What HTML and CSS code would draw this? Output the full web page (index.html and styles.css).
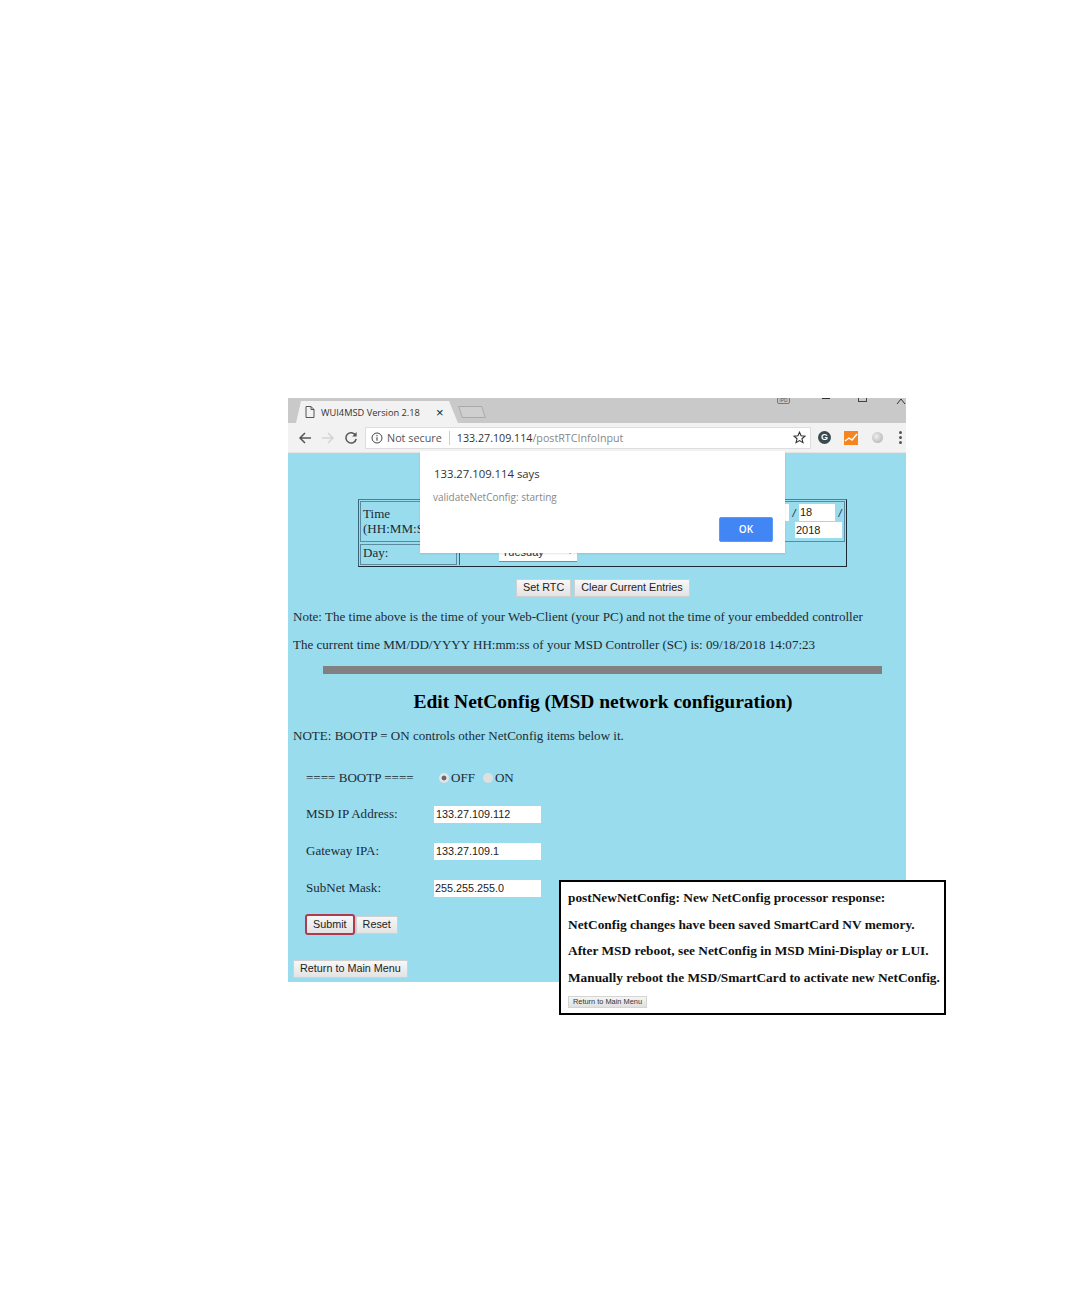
FILE: index.html
```html
<!DOCTYPE html>
<html lang="en">
<head>
<meta charset="utf-8">
<title>WUI4MSD Version 2.18</title>
<link rel="stylesheet" href="styles.css">
</head>
<body>
<div class="figure">
  <div class="window">
    <div class="tabstrip">
      <div class="tab">
        <svg class="doc" viewBox="0 0 10 12" width="10" height="12"><path d="M1 .5h5l3 3v8H1zM6 .5v3h3" fill="none" stroke="#555" stroke-width="1"/></svg>
        <span class="tab-title">WUI4MSD Version 2.18</span>
        <span class="tab-close">×</span>
      </div>
      <div class="newtab"></div>
      <div class="winctl">
        <span class="badge">IPD</span>
        <span class="min"></span>
        <span class="max"></span>
        <svg class="close" viewBox="0 0 10 6" width="10" height="6"><path d="M1 6L5 1l4 5" fill="none" stroke="#333" stroke-width="1"/></svg>
      </div>
    </div>
    <div class="toolbar">
      <svg class="nav" viewBox="0 0 14 14" width="14" height="14"><path d="M13 7H2M7 2L2 7l5 5" fill="none" stroke="#555" stroke-width="1.5"/></svg>
      <svg class="nav" viewBox="0 0 14 14" width="14" height="14"><path d="M1 7h11M7 2l5 5-5 5" fill="none" stroke="#d4d4d4" stroke-width="1.5"/></svg>
      <svg class="nav" viewBox="0 0 14 14" width="14" height="14"><path d="M11.6 4.2A5.2 5.2 0 1 0 12.2 8" fill="none" stroke="#555" stroke-width="1.5"/><path d="M12.6 1v4.4H8.2z" fill="#555"/></svg>
      <div class="omnibox">
        <svg viewBox="0 0 12 12" width="12" height="12"><circle cx="6" cy="6" r="5" fill="none" stroke="#444" stroke-width="1"/><path d="M6 5.2v3.6M6 3v1.2" stroke="#444" stroke-width="1.1"/></svg>
        <span class="secure">Not secure</span>
        <span class="sep"></span>
        <span class="url">133.27.109.114<span class="path">/postRTCInfoInput</span></span>
        <svg class="star" viewBox="0 0 14 14" width="13" height="13"><path d="M7 1.3l1.7 3.900 4.200.4-3.200 2.800 1 4.100L7 10.300l-3.700 2.200 1-4.100L1.100 5.600l4.200-.4z" fill="none" stroke="#333" stroke-width="1.2"/></svg>
      </div>
      <div class="ext">
        <span class="ext-g">G</span>
        <svg viewBox="0 0 14 14" width="14" height="14"><rect width="14" height="14" fill="#f5861f"/><path d="M1 10l4-3 3 2 5-6" fill="none" stroke="#fff" stroke-width="1.4"/></svg>
        <span class="ext-ball"></span>
        <span class="dots"><i></i><i></i><i></i></span>
      </div>
    </div>
    <main class="page">
      <div class="rtc">
        <div class="rtc-row rtc-time">
          <div class="rtc-label">Time<br>(HH:MM:SS)</div>
          <div class="rtc-values">
            <div class="date-line"><span class="field w40">14</span><span class="slash">/</span><span class="field w36">18</span><span class="slash">/</span></div>
            <div class="year-line"><span class="field w47">2018</span></div>
          </div>
        </div>
        <div class="rtc-row rtc-day">
          <div class="rtc-label">Day:</div>
          <div class="rtc-values"><span class="select">Tuesday<span class="caret">▾</span></span></div>
        </div>
      </div>
      <div class="actions">
        <span class="btn">Set RTC</span>
        <span class="btn">Clear Current Entries</span>
      </div>
      <p class="line note">Note: The time above is the time of your Web-Client (your PC) and not the time of your embedded controller</p>
      <p class="line current">The current time MM/DD/YYYY HH:mm:ss of your MSD Controller (SC) is: 09/18/2018 14:07:23</p>
      <div class="rule"></div>
      <h1>Edit NetConfig (MSD network configuration)</h1>
      <p class="line bootnote">NOTE: BOOTP = ON controls other NetConfig items below it.</p>
      <div class="form">
        <div class="form-row boot">
          <span class="form-label">==== BOOTP ====</span>
          <span class="radios"><i class="radio on"></i><span>OFF</span><i class="radio"></i><span>ON</span></span>
        </div>
        <div class="form-row"><span class="form-label">MSD IP Address:</span><span class="input">133.27.109.112</span></div>
        <div class="form-row"><span class="form-label">Gateway IPA:</span><span class="input">133.27.109.1</span></div>
        <div class="form-row"><span class="form-label">SubNet Mask:</span><span class="input tight">255.255.255.0</span></div>
        <div class="form-buttons"><span class="btn focus">Submit</span><span class="btn">Reset</span></div>
      </div>
      <div class="return"><span class="btn">Return to Main Menu</span></div>
    </main>
    <div class="dialog">
      <div class="dialog-title">133.27.109.114 says</div>
      <div class="dialog-msg">validateNetConfig: starting</div>
      <span class="ok">OK</span>
    </div>
    <div class="response">
      <p>postNewNetConfig: New NetConfig processor response:</p>
      <p>NetConfig changes have been saved SmartCard NV memory.</p>
      <p>After MSD reboot, see NetConfig in MSD Mini-Display or LUI.</p>
      <p>Manually reboot the MSD/SmartCard to activate new NetConfig.</p>
      <span class="mini-btn">Return to Main Menu</span>
    </div>
  </div>
</div>
</body>
</html>
```

FILE: styles.css
```css
* { box-sizing: border-box; }
html, body { margin: 0; padding: 0; background: #fff; }
body { width: 1080px; height: 1296px; overflow: hidden; }
.figure { padding: 398px 0 0 288px; }
.window { position: relative; width: 618px; }

.tabstrip { height: 25px; background: #c9c9c9; display: flex; align-items: flex-end; position: relative; padding-left: 8px; }
.tab { flex: none; width: 162px; height: 22px; background: #f2f2f2; clip-path: polygon(0 100%, 5px 0, 153px 0, 162px 100%); display: flex; align-items: center; padding-left: 9px; font-family: "Open Sans", sans-serif; color: #333; }
.doc { margin-right: 6px; }
.tab-title { width: 115px; white-space: nowrap; font-size: 9.25px; }
.tab-close { font: 13px "Liberation Sans", sans-serif; color: #222; }
.newtab { width: 24px; height: 12px; margin: 0 0 5px 2px; border: 1px solid #aaa; background: #cfcfcf; transform: skewX(18deg); }
.winctl { position: absolute; inset: 0 0 auto auto; width: 130px; height: 8px; overflow: hidden; }
.badge { position: absolute; left: 1px; top: -1px; width: 13px; height: 7px; border: 1px solid #777; border-radius: 2px; font: 5px/5px "Liberation Sans", sans-serif; color: #555; text-align: center; overflow: hidden; }
.min { position: absolute; left: 46px; top: 0; width: 8px; height: 1px; background: #333; }
.max { position: absolute; left: 82px; top: 0; width: 9px; height: 4px; border: 1px solid #444; border-top: 0; }
.close { position: absolute; left: 120px; top: 0; }

.toolbar { height: 30px; background: #f2f2f2; display: flex; align-items: center; padding: 0 0 0 10px; gap: 9px; border-bottom: 1px solid #e4e4e4; }
.omnibox { flex: none; width: 446px; height: 22px; margin-left: -2px; background: #fff; border: 1px solid #ddd; display: flex; align-items: center; padding: 0 4px 0 5px; font: 10.800px "Open Sans", sans-serif; color: #555; white-space: nowrap; }
.secure { margin-left: 4px; color: #555; }
.sep { width: 1px; height: 14px; background: #ccc; margin: 0 7px 0 7px; }
.url { color: #333; flex: 1; font-size: 10.700px; }
.path { color: #888; }
.star { flex: none; }
.ext { display: flex; align-items: center; margin-left: -2px; }
.ext-g { width: 13px; height: 13px; border-radius: 50%; background: #3a4a50; color: #fff; font: bold 9px/13px "Liberation Sans", sans-serif; text-align: center; margin-right: 13px; }
.ext svg { margin-right: 14px; }
.ext-ball { width: 11px; height: 11px; border-radius: 50%; background: radial-gradient(circle at 40% 40%, #eee, #aaa); }
.dots { display: flex; flex-direction: column; gap: 2px; margin-left: 16px; }
.dots i { width: 3px; height: 3px; border-radius: 50%; background: #555; }

.page { height: 529px; background: #99dcee; padding-top: 46px; font-family: "Liberation Serif", serif; font-size: 13.050px; color: #1c2b33; position: relative; }
.rtc { width: 489px; height: 68px; margin-left: 70px; border: 1px solid; border-color: #4a7f95 #1a2a35 #1a2a35 #35667c; padding: 1px; display: flex; flex-direction: column; gap: 2px; }
.rtc-row { display: flex; gap: 2px; }
.rtc-time { height: 41px; }
.rtc-day { height: 21px; }
.rtc-label { width: 97px; border: 1px solid #5c8ba0; padding: 4px 2px 0; line-height: 15px; white-space: nowrap; overflow: hidden; }
.rtc-day .rtc-label { padding-top: 0; }
.rtc-values { flex: 1; border: 1px solid #5c8ba0; position: relative; }
.rtc-day .rtc-values { border-width: 0 0 0 1px; border-left-color: #35667c; }
.date-line { position: absolute; top: 2px; right: 1px; display: flex; align-items: center; gap: 2px; }
.year-line { position: absolute; top: 20px; right: 2px; }
.field { display: block; height: 17px; background: #fff; font: 11px/17px "Liberation Sans", sans-serif; padding-left: 1px; color: #222; }
.w36 { width: 36px; }
.w40 { width: 40px; }
.w47 { width: 47px; height: 16px; line-height: 16px; }
.slash { font: italic 11px "Liberation Sans", sans-serif; width: 6px; text-align: center; }
.select { position: absolute; left: 39px; top: 0; width: 78px; height: 18px; background: #fff; border-bottom: 1px solid #888; font: 11px/16px "Liberation Sans", sans-serif; padding-left: 3px; }
.caret { position: absolute; right: 5px; font-size: 8px; }

.actions { display: flex; gap: 3px; margin: 12px 0 0 228px; }
.btn { display: inline-block; height: 18px; padding: 0 6px; background: linear-gradient(#f7f7f7, #e3e3e3); border: 1px solid #d0d0d0; font: 10.800px/15px "Liberation Sans", sans-serif; color: #222; white-space: nowrap; }
.line { margin: 0 0 0 5px; line-height: 16px; white-space: nowrap; }
.note { margin-top: 12px; }
.current { margin-top: 12px; }
.rule { height: 8px; margin: 13px 24px 0 35px; background: #808080; }
h1 { margin: 17px 0 0; font-size: 19.500px; line-height: 22px; text-align: center; color: #000; width: 630px; }
.bootnote { margin-top: 15px; }
.form { margin: 0 0 0 18px; }
.form-row { display: flex; align-items: center; height: 20px; margin-top: 17px; }
.boot { margin-top: 24px; }
.boot + .form-row { margin-top: 16px; }
.form-label { width: 128px; }
.radios { display: flex; align-items: center; gap: 2px; margin-left: 5px; }
.radio { width: 10px; height: 10px; border-radius: 50%; background: #dfdfdf; display: block; }
.radios span + .radio { margin-left: 6px; }
.radio.on { background: radial-gradient(circle, #666 0 2px, #e4e4e4 2.800px); }
.input { width: 107px; height: 17px; background: #fff; font: 10.800px/17px "Liberation Sans", sans-serif; padding-left: 2px; color: #222; }
.tight { padding-left: 1px; }
.form-buttons { display: flex; align-items: center; gap: 1px; margin: 16px 0 0 -1px; }
.focus { height: 21px; line-height: 17px; padding: 0 6px; border: 2px solid #b03a52; border-radius: 3px; }
.return { margin: 25px 0 0 5px; }

.dialog { position: absolute; left: 132px; top: 53px; width: 365px; height: 102px; background: #fff; box-shadow: 0 1px 2px rgba(0,0,0,.1); font-family: "Open Sans", sans-serif; }
.dialog-title { position: absolute; left: 14px; top: 15px; font-size: 11.300px; line-height: 16px; color: #333; }
.dialog-msg { position: absolute; left: 13px; top: 39px; font-size: 10px; line-height: 14px; color: #888; }
.ok { position: absolute; right: 12px; bottom: 11px; width: 54px; height: 25px; background: #4285f4; border: 1px solid #5a9bf5; border-radius: 2px; color: #fff; font: 600 10px/23px "Open Sans", sans-serif; text-align: center; }

.response { position: absolute; left: 271px; top: 482px; width: 387px; height: 135px; background: #fff; border: 2px solid #000; padding: 8px 0 0 7px; font: bold 13.350px/16px "Liberation Serif", serif; color: #111; white-space: nowrap; }
.response p { margin: 0 0 10.500px; }
.mini-btn { display: block; width: 79px; height: 12px; margin-top: 0; background: linear-gradient(#f5f5f5, #e0e0e0); border: 1px solid #d5d5d5; font: 400 7.400px/10px "Liberation Sans", sans-serif; text-align: center; color: #333; }
```
